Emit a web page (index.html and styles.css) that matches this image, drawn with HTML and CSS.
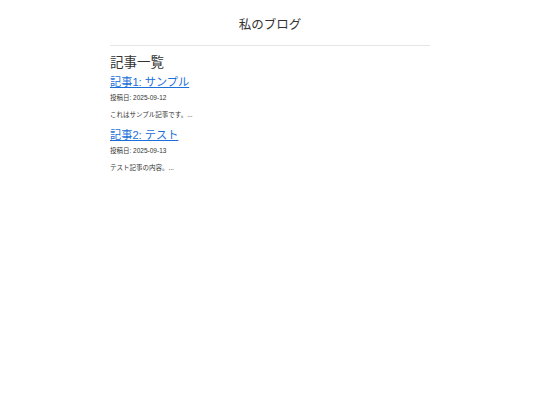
FILE: index.html
```html
<!DOCTYPE html>
<html lang="ja">
<head>
    <meta charset="UTF-8">
    <meta name="viewport" content="width=device-width, initial-scale=1.0">
    <title>私のブログ</title>
    <link rel="stylesheet" href="styles.css">
</head>
<body>
    <div class="container">
        <header class="site-header">
            <h1>私のブログ</h1>
        </header>

        <main>
            <h2>記事一覧</h2>

            <article class="post">
                <h3><a href="#">記事1: サンプル</a></h3>
                <p class="post-date">投稿日: 2025-09-12</p>
                <p class="post-summary">これはサンプル記事です。...</p>
            </article>

            <article class="post">
                <h3><a href="#">記事2: テスト</a></h3>
                <p class="post-date">投稿日: 2025-09-13</p>
                <p class="post-summary">テスト記事の内容。...</p>
            </article>
        </main>
    </div>
</body>
</html>
```

FILE: styles.css
```css
body {
    font-family: 'Liberation Sans', 'Noto Sans CJK JP', sans-serif;
    margin: 0;
    background: #fff;
    color: #333;
}
.container {
    width: 320px;
    margin: 0 auto;
}
.site-header {
    padding: 17px 0 12px;
    border-bottom: 1px solid #e4e4e4;
    text-align: center;
}
.site-header h1 {
    font-size: 12.5px;
    font-weight: normal;
    line-height: 16px;
    margin: 0;
}
h2 {
    font-size: 13.5px;
    font-weight: normal;
    line-height: 16px;
    margin: 9px 0 0;
}
.post h3 {
    font-size: 11.2px;
    font-weight: normal;
    line-height: 14px;
    margin: 4px 0 0;
}
.post h3 a {
    color: #1a6fd9;
}
.post p {
    font-size: 6.5px;
    line-height: 8px;
    margin: 0;
}
.post-date {
    padding-top: 5px;
}
.post-summary {
    padding-top: 9px;
    padding-bottom: 5px;
}
```
